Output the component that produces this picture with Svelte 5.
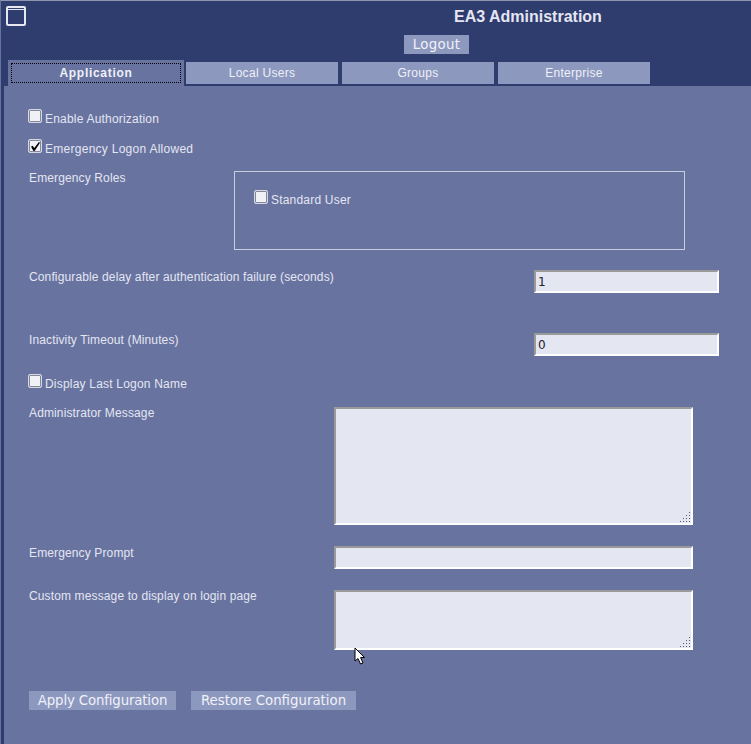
<script lang="ts">
	const tabs = ['Application', 'Local Users', 'Groups', 'Enterprise'];
	const gripDots = [
		[9, 0],
		[6, 3], [9, 3],
		[3, 6], [6, 6], [9, 6],
		[0, 9], [3, 9], [6, 9], [9, 9]
	];
</script>

{#snippet grip()}
	<svg class="grip" width="10" height="10" viewBox="0 0 10 10" aria-hidden="true">
		{#each gripDots as [x, y]}
			<rect {x} {y} width="1" height="1" fill="#555b78" />
		{/each}
	</svg>
{/snippet}

<div class="window">
	<header>
		<svg class="window-icon" width="20" height="20" viewBox="0 0 20 20" aria-hidden="true">
			<rect x="1" y="1" width="18" height="18" rx="1" fill="none" stroke="#e4e6f2" stroke-width="2" />
			<rect x="1" y="3" width="18" height="1" fill="#e4e6f2" />
		</svg>
		<h1>EA3 Administration</h1>
		<button class="btn logout">Logout</button>
	</header>

	<nav>
		{#each tabs as tab, i}
			<div class="tab" class:active={i === 0}>
				<span class="tab-label">{tab}</span>
			</div>
		{/each}
	</nav>

	<main>
		<label class="check first">
			<input type="checkbox" />
			<span>Enable Authorization</span>
		</label>
		<label class="check second">
			<input type="checkbox" checked />
			<span>Emergency Logon Allowed</span>
		</label>

		<div class="row roles-row">
			<span class="label">Emergency Roles</span>
			<div class="roles">
				<label class="check">
					<input type="checkbox" />
					<span>Standard User</span>
				</label>
			</div>
		</div>

		<div class="row delay-row">
			<span class="label">Configurable delay after authentication failure (seconds)</span>
			<input class="field num" type="text" value="1" />
		</div>

		<div class="row timeout-row">
			<span class="label">Inactivity Timeout (Minutes)</span>
			<input class="field num" type="text" value="0" />
		</div>

		<label class="check display">
			<input type="checkbox" />
			<span>Display Last Logon Name</span>
		</label>

		<div class="row message-row">
			<span class="label">Administrator Message</span>
			<div class="area big">
				<textarea class="field"></textarea>
				{@render grip()}
			</div>
		</div>

		<div class="row prompt-row">
			<span class="label">Emergency Prompt</span>
			<input class="field wide" type="text" />
		</div>

		<div class="row custom-row">
			<span class="label">Custom message to display on login page</span>
			<div class="area small">
				<textarea class="field"></textarea>
				{@render grip()}
			</div>
		</div>

		<div class="actions">
			<button class="btn apply">Apply Configuration</button>
			<button class="btn restore">Restore Configuration</button>
		</div>

		<svg class="cursor" width="13" height="19" viewBox="0 0 13 19" aria-hidden="true">
			<path d="M1 1 L1 14 L4 11.5 L6.5 17 L9 16 L6.6 10.6 L10.5 10.5 Z" fill="#fff" stroke="#000" stroke-width="1" />
		</svg>
	</main>
</div>

<style>
	:global(body) {
		background: #2f3c6e;
	}

	.window {
		position: relative;
		box-sizing: border-box;
		height: 744px;
		overflow: hidden;
		background: #2f3c6e;
		border-top: 1px solid #8f96ad;
		border-left: 1px solid #6873a0;
		font-family: 'Liberation Sans', Arial, sans-serif;
		font-size: 12px;
		color: #e4e6f2;
	}

	header {
		height: 61px;
		box-sizing: border-box;
		position: relative;
	}

	.window-icon {
		position: absolute;
		left: 5px;
		top: 5px;
	}

	h1 {
		margin: 0;
		padding: 7px 0 0 453px;
		font-size: 16px;
		line-height: 18px;
		font-weight: 700;
		color: #e4e6f2;
	}

	.btn {
		display: block;
		box-sizing: border-box;
		height: 19px;
		padding: 0;
		border: 0;
		background: #8d98bf;
		color: #f0f1f8;
		font-family: 'DejaVu Sans', sans-serif;
		font-size: 13.33px;
		line-height: 19px;
		text-align: center;
	}

	.logout {
		width: 65px;
		margin: 9px 0 0 403px;
		letter-spacing: 0.3px;
	}

	nav {
		display: flex;
		align-items: flex-end;
		height: 24px;
		padding-left: 7px;
	}

	.tab {
		width: 152px;
		height: 22px;
		margin: 0 4px 2px 0;
		display: flex;
		align-items: center;
		justify-content: center;
		background: #8d98bf;
		color: #eef0f7;
	}

	.tab.active {
		box-sizing: border-box;
		width: 176px;
		height: 26px;
		margin: 0 2px 0 0;
		padding: 3px;
		background: #6873a0;
		font-weight: 700;
	}

	.tab-label {
		letter-spacing: 0.3px;
	}

	.active .tab-label {
		letter-spacing: 0.7px;
		width: 100%;
		height: 100%;
		box-sizing: border-box;
		border: 1px dotted #000;
		display: flex;
		align-items: center;
		justify-content: center;
	}

	main {
		position: relative;
		margin-left: 3px;
		height: 658px;
		box-sizing: border-box;
		padding: 24px 0 0 25px;
		background: #6873a0;
	}

	.check {
		display: flex;
		align-items: flex-start;
		height: 12px;
		letter-spacing: 0.2px;
	}

	.check span {
		margin: 2px 0 0 3px;
		line-height: 14px;
	}

	.check input {
		appearance: none;
		box-sizing: border-box;
		position: relative;
		flex: none;
		width: 14px;
		height: 14px;
		margin: -1px 0 0 -1px;
		background: #f0f1f6;
		border: 1px solid #d5d7e3;
		box-shadow: inset 0 0 0 1px #85879a;
		border-radius: 2px;
	}

	.check input:checked::before {
		content: '';
		position: absolute;
		left: 2px;
		top: 2px;
		width: 9px;
		height: 9px;
		background: #000;
		clip-path: polygon(0 52%, 18% 42%, 36% 66%, 88% 0, 100% 8%, 40% 100%, 28% 100%);
	}

	.second {
		margin-top: 18px;
		letter-spacing: 0.27px;
	}

	.row {
		position: relative;
		display: flex;
		align-items: flex-start;
		justify-content: space-between;
	}

	.label {
		display: block;
		line-height: 14px;
		letter-spacing: 0.13px;
		margin-top: -1px;
	}

	.roles-row {
		margin-top: 19px;
		height: 79px;
	}

	.roles-row .label,
	.prompt-row .label {
		margin-top: 0;
	}

	.roles {
		box-sizing: border-box;
		position: absolute;
		left: 205px;
		top: 0;
		width: 451px;
		height: 79px;
		padding: 19px 0 0 20px;
		border: 1px solid #c9cde0;
	}

	.field {
		box-sizing: border-box;
		display: block;
		margin: 0;
		padding: 0 2px;
		background: #e4e6f2;
		border: 2px solid;
		border-color: #9a9a9a #fff #fff #9a9a9a;
		border-radius: 0;
		color: #22222a;
		font-family: 'DejaVu Sans', sans-serif;
		font-size: 12px;
		outline: none;
		resize: none;
	}

	.num {
		width: 185px;
		height: 23px;
		margin-right: 32px;
	}

	.delay-row {
		margin-top: 20px;
		height: 23px;
	}

	.delay-row .label,
	.timeout-row .label {
		margin-top: 0;
	}

	.timeout-row {
		margin-top: 40px;
		height: 23px;
	}

	.display {
		margin-top: 19px;
	}

	.message-row {
		margin-top: 20px;
		height: 118px;
	}

	.area {
		position: relative;
		margin-right: 58px;
		width: 359px;
	}

	.area textarea {
		width: 100%;
		height: 100%;
	}

	.area.big {
		height: 118px;
	}

	.area.small {
		height: 60px;
	}

	.grip {
		position: absolute;
		right: 3px;
		bottom: 3px;
	}

	.prompt-row {
		margin-top: 21px;
		height: 23px;
	}

	.wide {
		width: 359px;
		height: 23px;
		margin-right: 58px;
	}

	.custom-row {
		margin-top: 21px;
		height: 60px;
	}

	.actions {
		display: flex;
		gap: 15px;
		margin-top: 41px;
	}

	.apply {
		width: 147px;
		letter-spacing: -0.15px;
	}

	.restore {
		width: 165px;
	}

	.cursor {
		position: absolute;
		left: 350px;
		top: 561px;
	}
</style>
